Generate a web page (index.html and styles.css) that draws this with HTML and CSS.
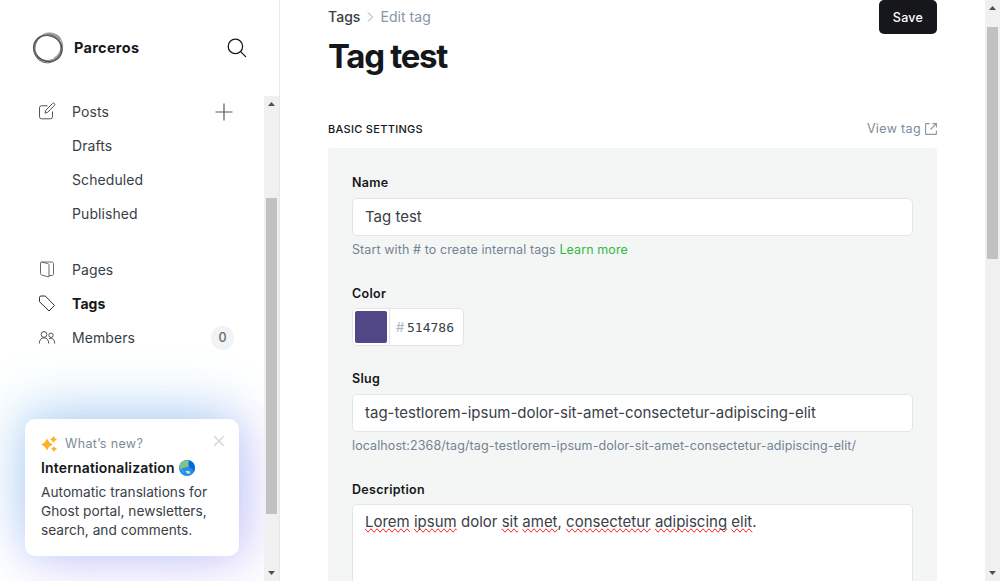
FILE: index.html
```html
<!DOCTYPE html>
<html lang="en">
<head>
<meta charset="utf-8">
<title>Edit tag - Parceros</title>
<link rel="stylesheet" href="styles.css">
</head>
<body>
<div class="app">
  <aside class="sidebar">
    <header class="site">
      <svg class="site-logo" width="32" height="32" viewBox="0 0 32 32" fill="none">
        <path d="M11 3.200C17 .2 25 1.500 28.500 8M29.300 11c2 6-1.500 13-7 16" stroke="#b0b0b0" stroke-width="2.600"/>
        <ellipse cx="15.500" cy="16" rx="14" ry="13.500" stroke="#777" stroke-width="1.200"/>
        <ellipse cx="16.800" cy="15.200" rx="14" ry="13" transform="rotate(-38 16.800 15.200)" stroke="#909090" stroke-width="1"/>
        <ellipse cx="16" cy="16.500" rx="14.400" ry="12.700" transform="rotate(28 16 16.500)" stroke="#444" stroke-width="1"/>
        <ellipse cx="15.500" cy="17" rx="13.500" ry="14" transform="rotate(20 15.500 17)" stroke="#666" stroke-width=".9"/>
      </svg>
      <span class="site-name">Parceros</span>
      <svg class="site-search" width="20" height="20" viewBox="0 0 20 20" fill="none" stroke="#15171a" stroke-width="1.250" stroke-linecap="round"><circle cx="8.400" cy="8.400" r="7.200"/><path d="M13.600 13.600l5 5"/></svg>
    </header>
    <div class="nav-scroll">
      <nav class="nav">
        <a class="nav-item"><svg class="nav-icon" width="18" height="18" viewBox="0 0 18 18" fill="none" stroke="#50555d" stroke-linejoin="round"><path d="M9.500 3.800h-6a2 2 0 0 0-2 2v9a2 2 0 0 0 2 2h9a2 2 0 0 0 2-2V9.500"/><path d="M7 11.200l.8-3L14.500 1.500a1.300 1.300 0 0 1 1.900 1.900L9.800 10.200z"/></svg><span>Posts</span><svg class="nav-plus" width="18" height="18" viewBox="0 0 18 18" stroke="#555b63" stroke-width="1.200"><path d="M9 .5v17M.5 9h17"/></svg></a>
        <a class="nav-item">Drafts</a>
        <a class="nav-item">Scheduled</a>
        <a class="nav-item group-end">Published</a>
        <a class="nav-item"><svg class="nav-icon" width="18" height="18" viewBox="0 0 18 18" fill="none" stroke="#656a72" stroke-linejoin="round"><path d="M3.500 2l6 1.500c1 .3 1.500 1 1.500 2V17L3.800 15.100C3 14.900 2.500 14.300 2.500 13.500V3c0-.6.400-1 1-1h10.400c.9 0 1.600.7 1.600 1.600v10.300c0 .9-.7 1.600-1.600 1.600H11"/></svg><span>Pages</span></a>
        <a class="nav-item active"><svg class="nav-icon" width="18" height="18" viewBox="0 0 18 18" fill="none" stroke="#15171a" stroke-width=".9" stroke-linejoin="round"><path d="M1.500 3.500a1.500 1.500 0 0 1 1.500-1.500h4.300L16.500 11.500 11 17 1.500 7.700z"/></svg><span>Tags</span></a>
        <a class="nav-item"><svg class="nav-icon" width="18" height="18" viewBox="0 0 18 18" fill="none" stroke="#4d525a"><circle cx="6" cy="6.500" r="2.900"/><circle cx="13" cy="7.300" r="2.200"/><path d="M1.300 15.500c0-3.500 1.800-5.700 4.700-5.700S10.700 12 10.700 15.500M11 10.800c3.200-1.400 5.700.6 5.700 4.700"/></svg><span>Members</span><span class="count">0</span></a>
      </nav>
      <section class="whats-new">
        <div class="news-head">
          <svg width="16" height="16" viewBox="0 0 16 16" fill="#ffb01f"><path d="M6 2.200Q7.500 7 12 8.500Q7.500 10 6 14.800Q4.500 10 0 8.500Q4.500 7 6 2.200zM12.500 0Q13.300 2.700 16 3.500Q13.300 4.300 12.500 7Q11.700 4.300 9 3.500Q11.700 2.700 12.500 0zM13 10Q13.700 12.200 16 12.800Q13.700 13.600 13 16Q12.300 13.600 10 12.800Q12.300 12.200 13 10z"/></svg>
          <span class="news-label">What’s new?</span>
          <svg class="news-close" width="10" height="10" viewBox="0 0 10 10" stroke="#d2d4d6" stroke-width="1.400"><path d="M.3.300l9.400 9.400M9.700.300L.3 9.700"/></svg>
        </div>
        <h2 class="news-title">Internationalization
          <svg width="16" height="16" viewBox="0 0 16 16"><circle cx="8" cy="8" r="8" fill="#1f8bf5"/><path d="M10 .3a8 8 0 0 1 4.500 12.300Q14 8 11.500 8L9 5z" fill="#0866d7"/><path d="M1 4C3 1 6 0 9 .5l1 1.500-1 2 1 1-1.500 2L7 7.500 6 6.500 5.500 8.500 4 7.500 2.500 9 .5 8z" fill="#86c27e"/><path d="M6 11.500l2.500-1 2.500 1 .2 2-2.500.5z" fill="#d5d8a0"/><path d="M1.500 9l2 1 1 3" fill="none" stroke="#4fb0f5"/></svg>
        </h2>
        <p class="news-text">Automatic translations for Ghost portal, newsletters, search, and comments.</p>
      </section>
    </div>
    <div class="scrollbar nav-bar"><i class="arrow up"></i><i class="thumb"></i><i class="arrow down"></i></div>
  </aside>
  <main class="content">
    <header class="page-head">
      <div>
        <div class="crumbs"><span class="crumb">Tags</span><svg width="7" height="10" viewBox="0 0 7 10" fill="none" stroke="#8b98a8" stroke-width=".9"><path d="M1 .5L5.500 5 1 9.500"/></svg><span>Edit tag</span></div>
        <h1 class="title">Tag test</h1>
      </div>
      <button class="save">Save</button>
    </header>
    <div class="section-head">
      <h4 class="section-title">Basic settings</h4>
      <a class="view-tag">View tag <svg width="12" height="12" viewBox="0 0 12 12" fill="none" stroke="#8796a6" stroke-width="1.100"><path d="M4.500.6H1.100q-.5 0-.5.500v9.800q0 .5.500.5h9.800q.5 0 .5-.5V7.500M7.500.6h3.900v3.900M11.400.6L5.500 6.500"/></svg></a>
    </div>
    <form class="settings">
      <div class="field">
        <label class="label">Name</label>
        <div class="input">Tag test</div>
        <p class="hint">Start with # to create internal tags <a class="learn">Learn more</a></p>
      </div>
      <div class="field color-field">
        <label class="label">Color</label>
        <div class="color"><span class="swatch-box"><span class="swatch"></span></span><span class="hash">#</span><span class="hex">514786</span></div>
      </div>
      <div class="field">
        <label class="label">Slug</label>
        <div class="input">tag-testlorem-ipsum-dolor-sit-amet-consectetur-adipiscing-elit</div>
        <p class="hint">localhost:2368/tag/tag-testlorem-ipsum-dolor-sit-amet-consectetur-adipiscing-elit/</p>
      </div>
      <div class="field">
        <label class="label">Description</label>
        <div class="input textarea"><span class="misspelt">Lorem</span> <span class="misspelt">ipsum</span> dolor <span class="misspelt">sit</span> <span class="misspelt">amet</span>, <span class="misspelt">consectetur</span> <span class="misspelt">adipiscing</span> <span class="misspelt">elit</span>.</div>
      </div>
    </form>
  </main>
  <div class="scrollbar page-bar"><i class="arrow up"></i><i class="thumb"></i><i class="arrow down"></i></div>
</div>
</body>
</html>
```
FILE: styles.css
```css
* { box-sizing: border-box; }
body { margin: 0; font-family: Inter, "Liberation Sans", sans-serif; color: #15171a; background: #fff; }
h1, h2, h4, p { margin: 0; }
svg { display: block; flex: none; }
.app { display: flex; height: 581px; overflow: hidden; }

/* Sidebar */
.sidebar { width: 280px; flex: none; display: grid; grid-template: 96px 485px / 264px 15px; border-right: 1px solid #e6e7e8; }
.site { grid-column: 1 / 3; display: flex; align-items: center; padding: 0 32px 0 32px; }
.site-name { margin-left: 10px; font-size: 14.500px; font-weight: 700; line-height: 20px; letter-spacing: .3px; }
.site-search { margin-left: auto; }
.nav-scroll { overflow: hidden; display: flex; flex-direction: column; justify-content: space-between; }
.nav { position: relative; z-index: 1; display: flex; flex-direction: column; padding: 0 30px 0 72px; margin-top: -2px; }
.nav-item { display: flex; align-items: center; height: 34px; padding-top: 1px; font-size: 14px; line-height: 18px; letter-spacing: .08px; color: #394047; }
.nav-icon { margin-left: -34px; margin-right: 16px; margin-top: -1px; }
.nav-plus { margin-left: auto; margin-right: 1px; }
.group-end { margin-bottom: 22px; }
.active { font-weight: 700; color: #15171a; }
.count { margin-left: auto; width: 23px; height: 24px; border-radius: 12px; background: #f1f3f4; display: grid; place-items: center; font-size: 12.500px; font-weight: 500; color: #626d79; }
.whats-new {
  width: 214px; height: 137px; margin: 0 0 25px 25px; padding: 15px 16px; border-radius: 10px; background: #fff;
  box-shadow: -8px -14px 56px rgba(48, 184, 224, .24), 12px 8px 56px rgba(170, 80, 240, .22), 0 0 36px rgba(90, 130, 250, .16);
}
.news-head { display: flex; align-items: center; height: 18px; }
.news-head > svg:first-child { margin-top: 2px; }
.news-label { margin-left: 8px; font-size: 12.500px; letter-spacing: .35px; color: #7c8b9a; }
.news-head .news-close { margin: -4px -1px 0 auto; }
.news-title { display: flex; align-items: center; gap: 4px; height: 20px; margin-top: 5px; font-size: 14px; font-weight: 600; letter-spacing: .16px; }
.news-title svg { margin-top: 1px; }
.news-text { margin-top: 6px; font-size: 13.700px; line-height: 19px; color: #394047; }

/* Scrollbars */
.scrollbar { width: 15px; background: #f0f0f0; display: flex; flex-direction: column; align-items: center; }
.arrow { width: 7px; height: 4px; background: #505050; }
.up { clip-path: polygon(50% 0, 100% 100%, 0 100%); margin-top: 6px; }
.down { clip-path: polygon(0 0, 100% 0, 50% 100%); margin: auto 0 6px; }
.thumb { width: 11px; background: #c1c1c1; }
.nav-bar .thumb { height: 316px; margin-top: 92px; }
.page-bar { flex: none; }
.page-bar .thumb { height: 232px; margin-top: 17px; }

/* Editor */
.content { width: 705px; flex: none; padding: 0 48px; overflow: hidden; }
.page-head { display: flex; justify-content: space-between; align-items: flex-start; height: 108px; }
.crumbs { display: flex; align-items: center; gap: 6.500px; height: 34px; padding-bottom: 1px; font-size: 14px; line-height: 18px; letter-spacing: .04px; color: #8695a8; }
.crumb { font-weight: 500; color: #394047; }
.title { font-size: 33px; line-height: 40px; font-weight: 700; letter-spacing: -1.300px; margin-top: 2px; }
.save { width: 58px; height: 34px; border: 0; border-radius: 5px; background: #15171a; color: #fff; font: 500 12.500px Inter, sans-serif; letter-spacing: .25px; }
.section-head { display: flex; align-items: center; justify-content: space-between; height: 40px; }
.section-title { margin-top: 1px; font-size: 11px; font-weight: 500; text-transform: uppercase; letter-spacing: .3px; }
.view-tag { display: flex; align-items: center; gap: 4px; margin-top: 1px; font-size: 12.500px; letter-spacing: .35px; color: #7c8b9a; }
.settings { background: #f4f6f6; border-radius: 3px 3px 0 0; padding: 24px 24px 0; height: 500px; }
.field { height: 111px; }
.color-field { height: 85px; }
.label { display: block; height: 26px; line-height: 22px; font-size: 12.500px; font-weight: 600; letter-spacing: .3px; }
.input { height: 38px; padding: 0 12px; border: 1px solid #e1e6e9; border-radius: 5px; background: #fff; font-size: 15px; line-height: 36px; color: #394047; white-space: nowrap; }
.hint { margin-top: 4px; font-size: 12.500px; line-height: 20px; letter-spacing: .1px; color: #738393; white-space: nowrap; }
.learn { color: #30b940; }
.color { width: 112px; height: 38px; margin-top: -1px; display: flex; align-items: center; border: 1px solid #e1e6e9; border-radius: 5px; background: #fff; font-size: 13px; }
.swatch-box { width: 37px; height: 36px; padding: 2px; border-right: 1px solid #e1e6e9; }
.swatch { display: block; width: 32px; height: 32px; border-radius: 2px; background: #514786; }
.hash { width: 11px; margin-left: 6px; color: #abb4be; }
.hex { font-family: "DejaVu Sans Mono", monospace; color: #394047; }
.textarea { height: 120px; margin-top: -1px; padding-top: 7px; line-height: 20px; }
.misspelt { text-decoration-line: spelling-error; }
```
